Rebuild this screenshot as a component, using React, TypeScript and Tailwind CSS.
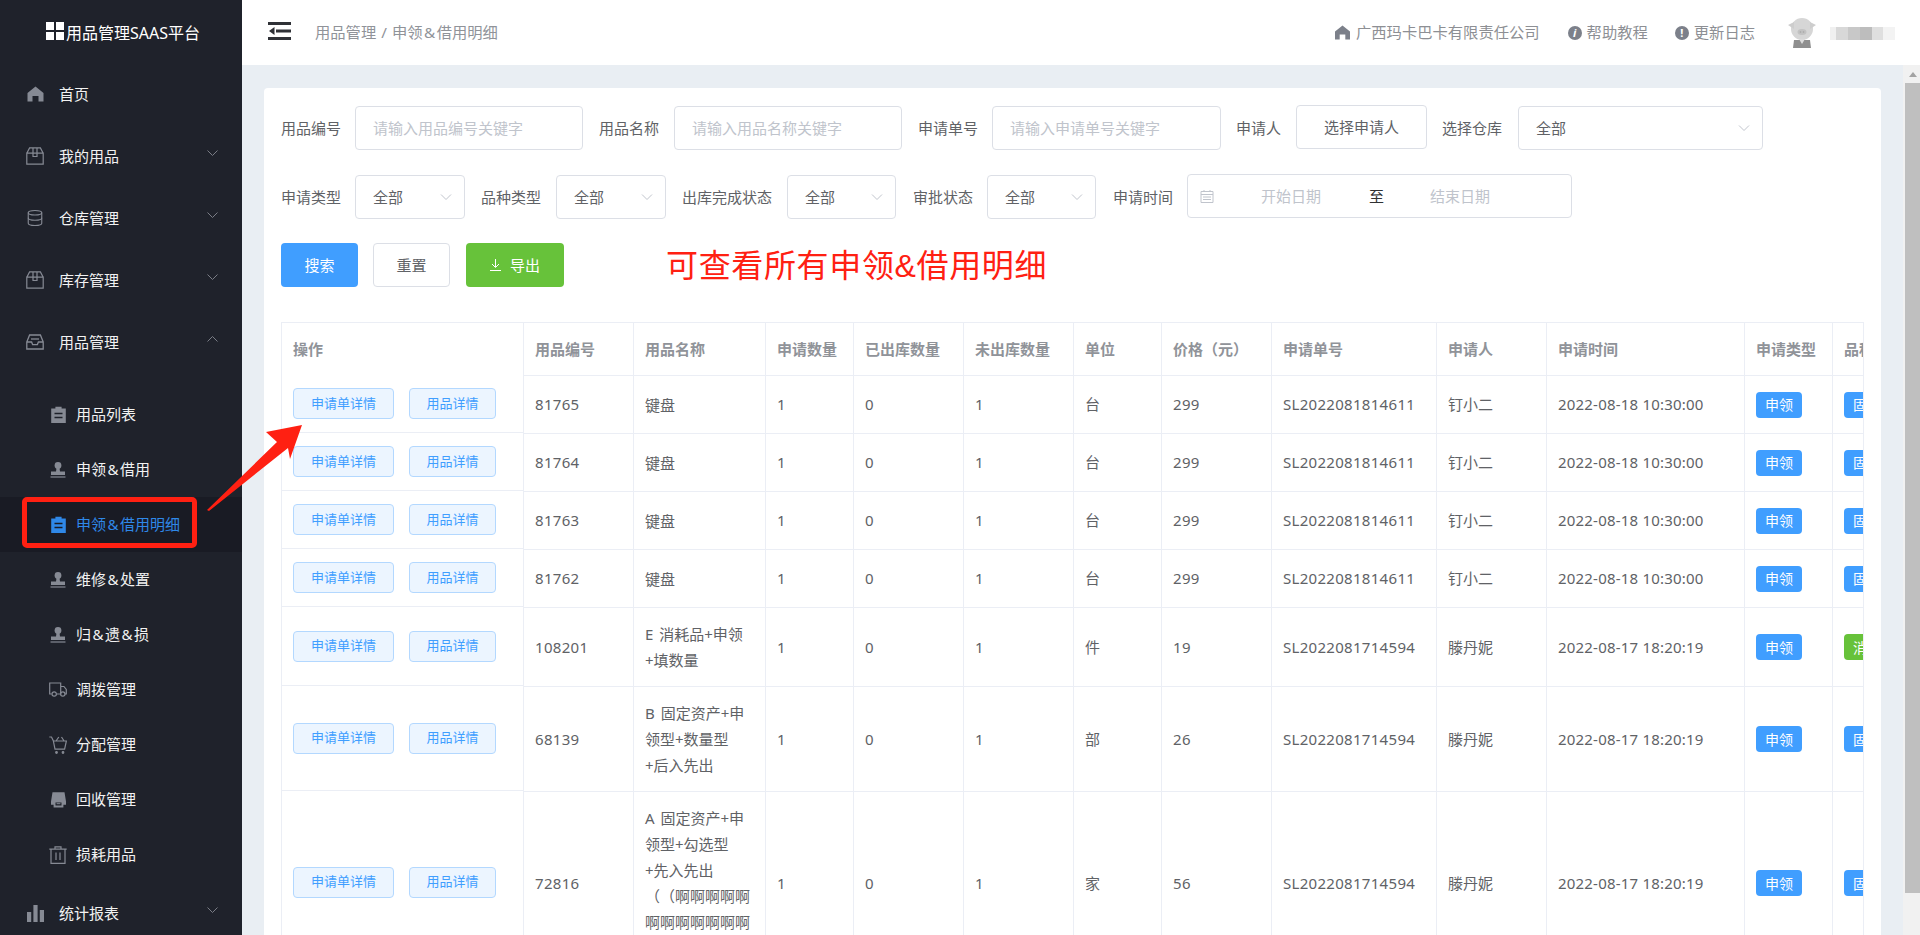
import React from "react";
import { Database } from "lucide-react";

const ico = "#868a94";

const Amp = ({ text }: { text: string }) => (
  <>
    {text.split("&").map((part, i) => (
      <React.Fragment key={i}>
        {i > 0 && <span className="mx-[1.5px]">&amp;</span>}
        {part}
      </React.Fragment>
    ))}
  </>
);

const Home = () => (
  <svg width="17" height="16" viewBox="0 0 17 16"><path d="M8.5.5 16.500 7v8.600h-5V10h-6v5.600h-5V7z" fill={ico} /></svg>
);
const Box = () => (
  <svg width="18" height="18" viewBox="0 0 18 18" fill="none" stroke={ico} strokeWidth="1.2">
    <path d="M.8 6.200h16.400v11H.8zM.8 6.200 3.600.9h10.800l2.800 5.300" />
    <path d="M7 .9v8.600h4V.9" />
  </svg>
);
const Tray = () => (
  <svg width="18" height="16" viewBox="0 0 18 16" fill="none" stroke={ico} strokeWidth="1.3">
    <path d="M.8 8 3.600 1h10.800l2.800 7v7H.8zM.8 8h4.800l1 2.600h4.800l1-2.600h4.800" />
    <path d="M5 5h8" />
  </svg>
);
const Clip = ({ c = ico, bg = "#1f222b" }: { c?: string; bg?: string }) => (
  <svg width="15" height="17" viewBox="0 0 15 17">
    <path d="M.2 2.600h4.200V.8h6.200v1.800h4.200V17H.2z" fill={c} />
    <path d="M3.500 7.500h8M3.500 11.500h8" stroke={bg} strokeWidth="1.4" />
  </svg>
);
const Stamp = () => (
  <svg width="16" height="16" viewBox="0 0 16 16">
    <circle cx="8" cy="3.500" r="3.400" fill={ico} />
    <path d="M6.500 6h3l.5 3.500h5V13H1V9.500h5z" fill={ico} />
    <path d="M.5 15h15" stroke={ico} strokeWidth="1.2" />
  </svg>
);
const Truck = () => (
  <svg width="18" height="15" viewBox="0 0 18 15" fill="none" stroke={ico} strokeWidth="1.2">
    <path d="M2.500 12H.7V1h11v11H8M11.700 4.500h3.200l2.400 3V12h-1.600M11.700 12h.6" />
    <circle cx="5.200" cy="12" r="2.200" />
    <circle cx="13.800" cy="12" r="2.200" />
  </svg>
);
const Cart = () => (
  <svg width="18" height="18" viewBox="0 0 18 18" fill="none" stroke={ico} strokeWidth="1.2">
    <path d="M.3 1h2.200l1.800 3.700 1.700 8.500h9.600L17.400 5H4.300M7 5l2.800-4M12.500 1l2.600 4" />
    <circle cx="7.500" cy="16.500" r=".8" fill={ico} />
    <circle cx="14" cy="16.500" r=".8" fill={ico} />
  </svg>
);
const Store = () => (
  <svg width="15" height="16" viewBox="0 0 15 16">
    <path d="M1.500.3h12L15 9.500v3.200h-2.600v2.800H2.600v-2.800H0V9.500z" fill={ico} />
    <path d="M4.500 10.500h6v3h-6z" fill="#1f222b" />
    <path d="M5.600 11.700h3.800" stroke={ico} strokeWidth="1" />
  </svg>
);
const Trash = () => (
  <svg width="18" height="18" viewBox="0 0 18 18" fill="none" stroke={ico} strokeWidth="1.2">
    <path d="M.3 3.200h17.400M6 3.200V.8h6v2.400M2 3.200v14.200h14V3.200M7 6.500v7.500M11 6.500v7.500" />
  </svg>
);
const Bars = () => (
  <svg width="17" height="17" viewBox="0 0 17 17" fill={ico}><path d="M0 7h4.200v10H0zM6.400 0h4.200v17H6.400zM12.800 5H17v12h-4.200z" /></svg>
);
const Chevron = ({ up = false, c = "#7a7d86", w = 11 }: { up?: boolean; c?: string; w?: number }) => (
  <svg width={w} height="6" viewBox="0 0 11 6" fill="none" stroke={c} strokeWidth="1">
    <path d={up ? "M.5 5.500l5-5 5 5" : "M.5.5l5 5 5-5"} />
  </svg>
);

const Top = ({ icon, text, arrow }: { icon: React.ReactNode; text: string; arrow?: "up" | "down" }) => (
  <div className="flex h-[62px] shrink-0 items-center pl-[26px] pr-[24px] text-[15px] text-[#f2f2f2]">
    <span className="mr-[15px] flex w-[18px] justify-center">{icon}</span>
    <span className="flex-1">{text}</span>
    {arrow && <span className="mb-[6px] flex"><Chevron up={arrow === "up"} /></span>}
  </div>
);
const Sub = ({ icon, text, active }: { icon: React.ReactNode; text: string; active?: boolean }) => (
  <div className={`flex h-[55px] shrink-0 items-center pl-[49px] text-[15px] ${active ? "bg-[#191b24] text-[#2f88e8]" : "text-[#f2f2f2]"}`}>
    <span className="mr-[9px] flex w-[18px] justify-center">{icon}</span>
    <span><Amp text={text} /></span>
  </div>
);

const Sidebar = () => (
  <aside className="flex h-full w-[242px] shrink-0 flex-col overflow-hidden bg-[#1f222b]">
    <div className="flex h-[63px] shrink-0 items-center pl-[46px] pt-[3px] text-[16px] text-white">
      <span className="mb-[5px] grid h-[18px] w-[18px] shrink-0 grid-cols-2 gap-[2px]">
        <i className="bg-white" /><i className="bg-white" /><i className="bg-white" /><i className="bg-white" />
      </span>
      <span className="ml-[2px] whitespace-nowrap">用品管理SAAS平台</span>
    </div>
    <Top icon={<Home />} text="首页" />
    <Top icon={<Box />} text="我的用品" arrow="down" />
    <Top icon={<Database size={18} color={ico} strokeWidth={1.5} />} text="仓库管理" arrow="down" />
    <Top icon={<Box />} text="库存管理" arrow="down" />
    <Top icon={<Tray />} text="用品管理" arrow="up" />
    <div className="h-[14px] shrink-0" />
    <Sub icon={<Clip />} text="用品列表" />
    <Sub icon={<Stamp />} text="申领&借用" />
    <Sub icon={<Clip c="#2f88e8" bg="#191b24" />} text="申领&借用明细" active />
    <Sub icon={<Stamp />} text="维修&处置" />
    <Sub icon={<Stamp />} text="归&遗&损" />
    <Sub icon={<Truck />} text="调拨管理" />
    <Sub icon={<Cart />} text="分配管理" />
    <Sub icon={<Store />} text="回收管理" />
    <Sub icon={<Trash />} text="损耗用品" />
    <Top icon={<Bars />} text="统计报表" arrow="down" />
  </aside>
);

const Pig = () => (
  <svg width="30" height="30" viewBox="0 0 30 30">
    <circle cx="15" cy="11" r="11" fill="#d6d6d6" />
    <path d="M1 7l6-3v7zM29 7l-6-3v7z" fill="#cdcdcd" />
    <ellipse cx="15" cy="14" rx="4.500" ry="3" fill="#c2c2c2" />
    <circle cx="13.500" cy="14" r=".8" fill="#a5a5a5" />
    <circle cx="16.500" cy="14" r=".8" fill="#a5a5a5" />
    <path d="M7 22h16l1 8H6z" fill="#8f8f8f" />
    <path d="M12 21h6l-3 5z" fill="#dcdcdc" />
  </svg>
);

const Header = () => (
  <header className="flex h-[65px] shrink-0 items-center bg-white pl-[26px] text-[15.3px] text-[#8d8f94]">
    <svg width="23" height="18" viewBox="0 0 23 18" className="mb-[3px] shrink-0">
      <path d="M0 0h23v3H0zM0 15h23v3H0zM8 7.500h15v3H8z" fill="#2f3136" />
      <path d="M6.500 5v8L1 9z" fill="#2f3136" />
    </svg>
    <span className="ml-[24px] flex text-[#909399]">
      <span>用品管理</span>
      <span className="ml-[5px]">/</span>
      <span className="ml-[5px]"><Amp text="申领&借用明细" /></span>
    </span>
    <div className="ml-auto flex items-center">
      <svg width="15" height="15" viewBox="0 0 16 16"><path d="M8 .5 16 7v8.500h-5V10H5v5.500H0V7z" fill="#7c808a" /></svg>
      <span className="ml-[6px]">广西玛卡巴卡有限责任公司</span>
      <span className="ml-[28px] flex h-[14px] w-[14px] items-center justify-center rounded-full bg-[#7c808a] text-[11px] font-bold italic leading-none text-white">i</span>
      <span className="ml-[5px]">帮助教程</span>
      <span className="ml-[27px] flex h-[14px] w-[14px] items-center justify-center rounded-full bg-[#7c808a] text-[11px] font-bold leading-none text-white">!</span>
      <span className="ml-[5px]">更新日志</span>
      <span className="ml-[32px] flex"><Pig /></span>
      <div className="ml-[13px] mr-[25px] mt-[2px] flex h-[13px] w-[65px]">
        <i className="w-[6px] bg-[#f0f0f0]" />
        <i className="w-[12px] bg-[#d8d8d8]" />
        <i className="w-[12px] bg-[#c8c8c8]" />
        <i className="w-[12px] bg-[#bdbdbd]" />
        <i className="w-[11px] bg-[#dfdfdf]" />
        <i className="w-[12px] bg-[#f3f3f3]" />
      </div>
    </div>
  </header>
);

const Label = ({ children, className = "" }: { children: React.ReactNode; className?: string }) => (
  <span className={`shrink-0 whitespace-nowrap text-[15px] text-[#606266] ${className}`}>{children}</span>
);
const Input = ({ ph, className }: { ph: string; className: string }) => (
  <div className={`flex h-[44px] shrink-0 items-center rounded-[4px] border border-[#dcdfe6] pl-[17px] text-[15px] text-[#c0c4cc] ${className}`}>{ph}</div>
);
const Select = ({ className }: { className: string }) => (
  <div className={`flex h-[44px] shrink-0 items-center justify-between rounded-[4px] border border-[#dcdfe6] pl-[17px] pr-[12px] text-[15px] text-[#606266] ${className}`}>
    全部
    <Chevron c="#c0c4cc" w={12} />
  </div>
);

const Filters = () => (
  <>
    <div className="flex h-[44px] items-center">
      <Label>用品编号</Label>
      <Input ph="请输入用品编号关键字" className="ml-[14px] w-[228px]" />
      <Label className="ml-[16px]">用品名称</Label>
      <Input ph="请输入用品名称关键字" className="ml-[15px] w-[228px]" />
      <Label className="ml-[16px]">申请单号</Label>
      <Input ph="请输入申请单号关键字" className="ml-[14px] w-[229px]" />
      <Label className="ml-[15px]">申请人</Label>
      <div className="mb-[2px] ml-[15px] flex h-[44px] w-[131px] shrink-0 items-center justify-center rounded-[4px] border border-[#dcdfe6] text-[15px] text-[#606266]">选择申请人</div>
      <Label className="ml-[15px]">选择仓库</Label>
      <Select className="ml-[16px] w-[245px]" />
    </div>
    <div className="mt-[25px] flex h-[44px] items-center">
      <Label>申请类型</Label>
      <Select className="ml-[14px] w-[110px]" />
      <Label className="ml-[16px]">品种类型</Label>
      <Select className="ml-[15px] w-[110px]" />
      <Label className="ml-[16px]">出库完成状态</Label>
      <Select className="ml-[15px] w-[109px]" />
      <Label className="ml-[17px]">审批状态</Label>
      <Select className="ml-[14px] w-[109px]" />
      <Label className="ml-[17px]">申请时间</Label>
      <div className="mb-[2px] ml-[14px] flex h-[44px] w-[385px] shrink-0 items-center rounded-[4px] border border-[#dcdfe6] text-[15px] text-[#c0c4cc]">
        <svg width="14" height="14" viewBox="0 0 14 14" fill="none" stroke="#c0c4cc" className="ml-[12px]">
          <path d="M1 2.500h12v11H1zM1 5.500h12M4 1v2M10 1v2M3 8h8M3 10.500h8" />
        </svg>
        <span className="ml-[47px]">开始日期</span>
        <span className="ml-[48px] text-[#303133]">至</span>
        <span className="ml-[46px]">结束日期</span>
      </div>
    </div>
    <div className="mt-[24px] flex h-[44px] items-center text-[15px]">
      <div className="flex h-[44px] w-[77px] items-center justify-center rounded-[4px] bg-[#409eff] text-white">搜索</div>
      <div className="ml-[15px] flex h-[44px] w-[77px] items-center justify-center rounded-[4px] border border-[#dcdfe6] text-[#606266]">重置</div>
      <div className="ml-[16px] flex h-[44px] w-[98px] items-center justify-center rounded-[4px] bg-[#67c23a] text-white">
        <svg width="11" height="12" viewBox="0 0 11 12" fill="none" stroke="#fff" strokeWidth="1"><path d="M5.500 0v8M2 5l3.500 3.500L9 5M0 11.500h11" /></svg>
        <span className="ml-[9px]">导出</span>
      </div>
      <span className="ml-[102px] mt-[1px] whitespace-nowrap font-['Liberation_Sans','Noto_Sans_CJK_SC',sans-serif] text-[32px] leading-[44px] tracking-[0.65px] text-[#ff2012]">可查看所有申领&amp;借用明细</span>
    </div>
  </>
);

type Row = { id: string; name: string[]; unit: string; price: string; no: string; who: string; at: string; kind: string; green?: boolean };
const base = ["81765", "81764", "81763", "81762"].map((id): Row => ({
  id, name: ["键盘"], unit: "台", price: "299", no: "SL2022081814611", who: "钉小二", at: "2022-08-18 10:30:00", kind: "固定资产",
}));
const rest: Row = { id: "", name: [], unit: "", price: "", no: "SL2022081714594", who: "滕丹妮", at: "2022-08-17 18:20:19", kind: "固定资产" };
const rows: Row[] = [
  ...base,
  { ...rest, id: "108201", name: ["E 消耗品+申领", "+填数量"], unit: "件", price: "19", kind: "消耗品", green: true },
  { ...rest, id: "68139", name: ["B 固定资产+申", "领型+数量型", "+后入先出"], unit: "部", price: "26" },
  { ...rest, id: "72816", name: ["A 固定资产+申", "领型+勾选型", "+先入先出", "（（啊啊啊啊啊", "啊啊啊啊啊啊啊", "啊啊啊））"], unit: "家", price: "56" },
];
const cols = [
  { t: "用品编号", w: "w-[110px]" }, { t: "用品名称", w: "w-[132px]" }, { t: "申请数量", w: "w-[88px]" }, { t: "已出库数量", w: "w-[110px]" },
  { t: "未出库数量", w: "w-[110px]" }, { t: "单位", w: "w-[88px]" }, { t: "价格（元）", w: "w-[110px]" }, { t: "申请单号", w: "w-[165px]" },
  { t: "申请人", w: "w-[110px]" }, { t: "申请时间", w: "w-[198px]" }, { t: "申请类型", w: "w-[88px]" }, { t: "品种类型", w: "w-[110px]" },
];
const td = "border-b border-r border-[#ebeef5] px-[11px] align-middle";
const Tag = ({ text, green }: { text: string; green?: boolean }) => (
  <span className={`inline-flex h-[26px] items-center whitespace-nowrap rounded-[4px] px-[9px] align-middle text-[14px] text-white ${green ? "bg-[#67c23a]" : "bg-[#409eff]"}`}>{text}</span>
);
const opBtn = "flex h-[31px] items-center justify-center rounded-[4px] border border-[#b3d8ff] bg-[#ecf5ff] text-[13px] text-[#409eff]";

const leftHeights = ["h-[58px]", "h-[58px]", "h-[58px]", "h-[58px]", "h-[79px]", "h-[105px]", "h-[183px]"];

const DataTable = () => (
  <div className="mt-[35px] flex w-[1583px] border-r border-t border-[#ebeef5]">
    <div className="w-[243px] shrink-0 border-l border-r border-[#ebeef5]">
      <div className="flex h-[52px] items-center pl-[11px] text-[15px] font-bold text-[#909399]">操作</div>
      {leftHeights.map((h, i) => (
        <div key={i} className={`flex items-center border-b border-[#ebeef5] pl-[11px] ${h}`}>
          <span className={`${opBtn} w-[101px]`}>申请单详情</span>
          <span className={`${opBtn} ml-[15px] w-[87px]`}>用品详情</span>
        </div>
      ))}
    </div>
    <div className="min-w-0 flex-1 overflow-hidden">
      <table className="w-[1419px] table-fixed border-separate border-spacing-0 text-left text-[15px] text-[#606266]">
        <colgroup>{cols.map((c) => <col key={c.t} className={c.w} />)}</colgroup>
        <thead>
          <tr className="h-[53px]">
            {cols.map((c) => (
              <th key={c.t} className={`${td} whitespace-nowrap font-bold text-[#909399]`}>{c.t}</th>
            ))}
          </tr>
        </thead>
        <tbody>
          {rows.map((r) => (
            <tr key={r.id} className="h-[58px]">
              <td className={`${td} tracking-[0.3px]`}>{r.id}</td>
              <td className={`${td} py-[13px] leading-[26px] [text-spacing-trim:space-all] [word-spacing:2px]`}>
                {r.name.map((l) => <div key={l} className="whitespace-nowrap">{l}</div>)}
              </td>
              <td className={td}>1</td>
              <td className={td}>0</td>
              <td className={td}>1</td>
              <td className={td}>{r.unit}</td>
              <td className={`${td} tracking-[0.3px]`}>{r.price}</td>
              <td className={`${td} whitespace-nowrap tracking-[0.3px]`}>{r.no}</td>
              <td className={td}>{r.who}</td>
              <td className={`${td} whitespace-nowrap tracking-[0.2px]`}>{r.at}</td>
              <td className={td}><Tag text="申领" /></td>
              <td className={td}><Tag text={r.kind} green={r.green} /></td>
            </tr>
          ))}
        </tbody>
      </table>
    </div>
  </div>
);

const Scrollbar = () => (
  <div className="flex h-full w-[17px] shrink-0 flex-col bg-[#f1f1f1] pl-[2px]">
    <div className="flex h-[18px] shrink-0 items-center justify-center">
      <span className="h-0 w-0 border-x-[4px] border-b-[5px] border-x-transparent border-b-[#a3a3a3]" />
    </div>
    <div className="h-[810px] shrink-0 bg-[#bfbfbf]" />
  </div>
);

export default function App() {
  return (
    <div className="relative flex h-[935px] w-[1920px] overflow-hidden bg-[#e9eef3] font-['Noto_Sans','Noto_Sans_CJK_SC',sans-serif]">
      <Sidebar />
      <div className="flex min-w-0 flex-1 flex-col">
        <Header />
        <div className="flex min-h-0 flex-1">
          <main className="min-w-0 flex-1 overflow-hidden pl-[22px] pr-[22px] pt-[23px]">
            <section className="rounded-[4px] bg-white px-[17px] pb-[40px] pt-[18px]">
              <Filters />
              <DataTable />
            </section>
          </main>
          <Scrollbar />
        </div>
      </div>
      <div className="absolute left-[22px] top-[497px] h-[51px] w-[175px] rounded-[5px] border-[5px] border-[#ff2012]" />
      <svg width="120" height="100" viewBox="0 0 120 100" className="absolute left-[195px] top-[420px]">
        <path d="M107 5 71 12 82 22 12 90 14 91 93 28 95 39z" fill="#ff2012" />
      </svg>
    </div>
  );
}
